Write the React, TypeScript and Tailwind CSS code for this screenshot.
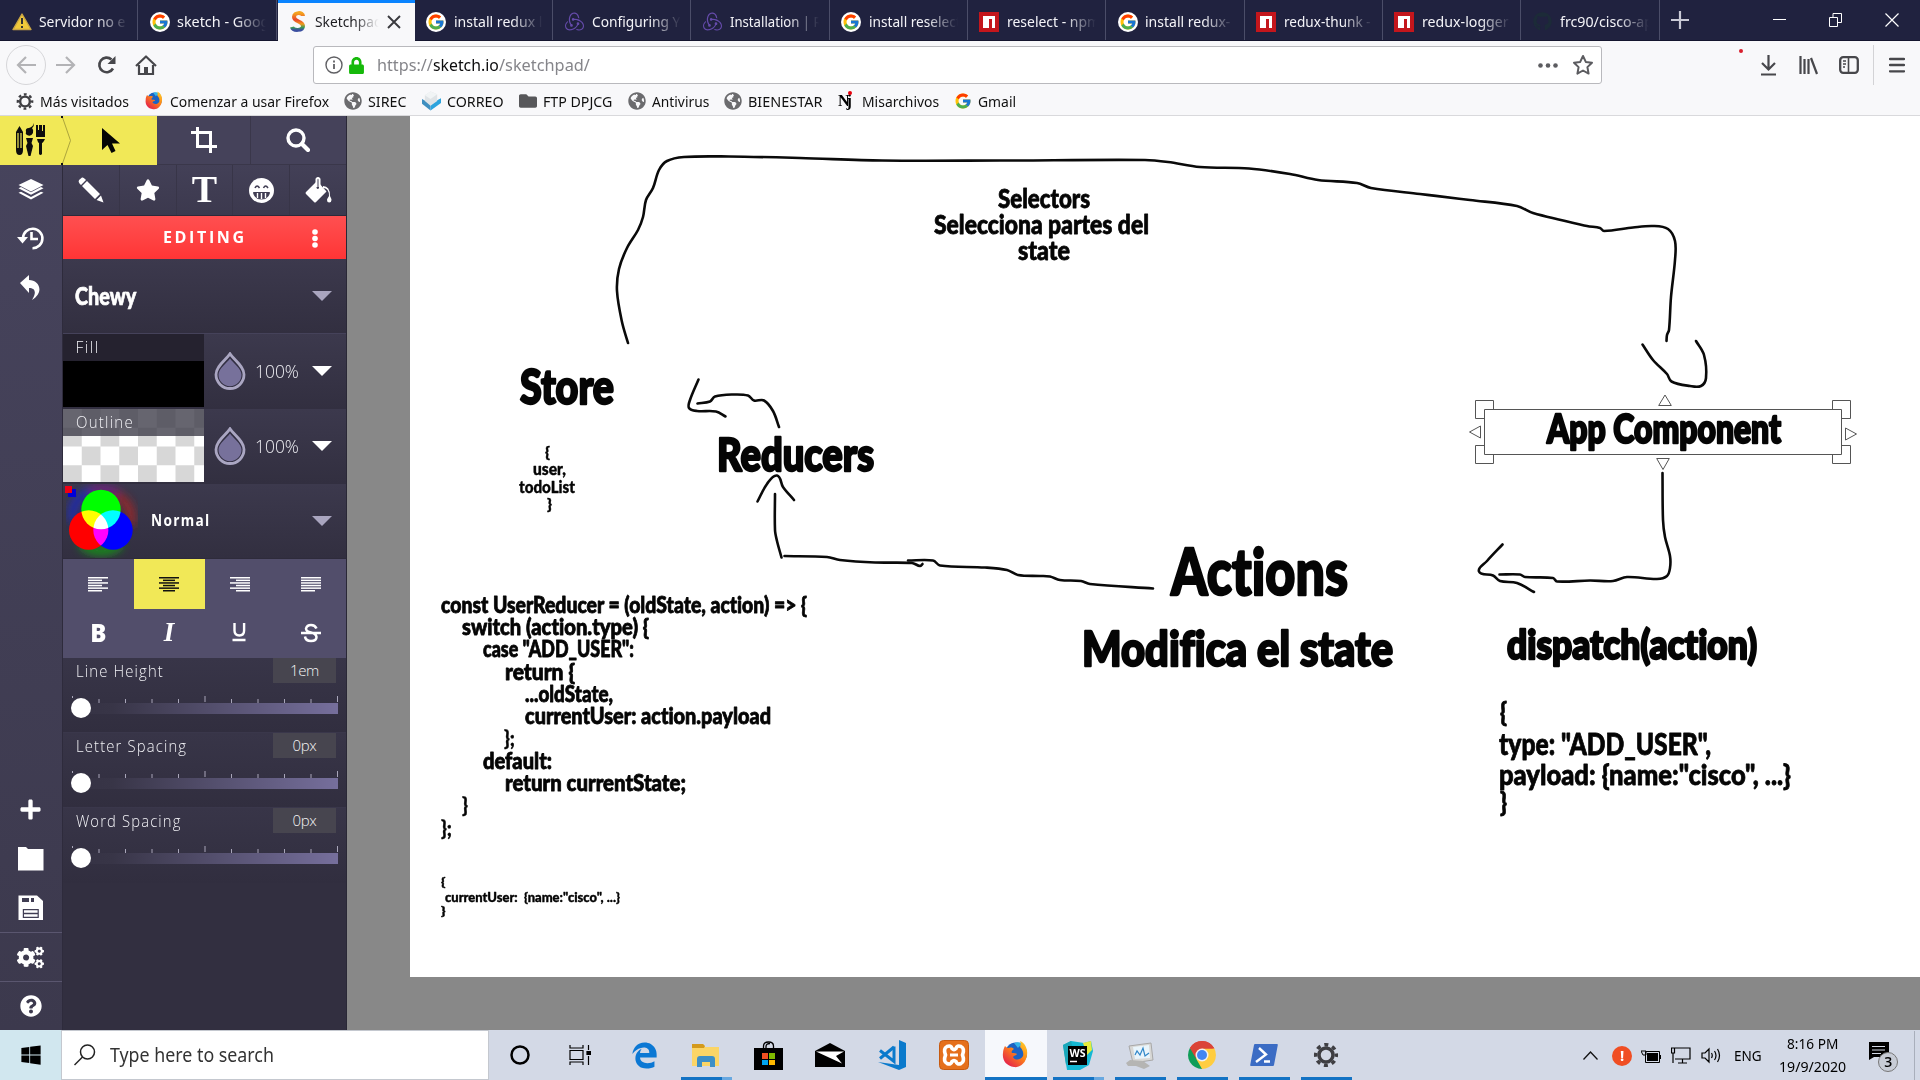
import { useLayoutEffect, useRef, useState, type ReactNode } from "react";
import { FaCogs, FaFolder, FaStar, FaWindows, FaGithub, FaEdgeLegacy, FaLock, FaPlus, FaQuestionCircle, FaGlobeAmericas } from "react-icons/fa";
import { FcGoogle } from "react-icons/fc";
import { SiRedux } from "react-icons/si";

/** A single line of text squeezed or stretched to an exact width. */
function Fit({ w, className = "", children }: { w: number; className?: string; children: ReactNode }) {
  const ref = useRef<HTMLSpanElement>(null);
  const [scale, setScale] = useState(1);
  useLayoutEffect(() => {
    if (ref.current) setScale(w / ref.current.offsetWidth);
  }, [w]);
  return (
    <span className={`inline-block shrink-0 ${className}`} style={{ width: w }}>
      <span ref={ref} className="inline-block origin-left whitespace-pre" style={{ transform: `scaleX(${scale})` }}>
        {children}
      </span>
    </span>
  );
}

/* ---------- small logos ---------- */

const GoogleBadge = () => (
  <span className="flex h-5 w-5 items-center justify-center rounded-full bg-white">
    <FcGoogle size={18} />
  </span>
);

const NpmIcon = () => (
  <svg width="20" height="20" viewBox="0 0 20 20">
    <rect width="20" height="20" fill="#c4161c" />
    <path d="M4 4h12v12h-3V7h-3v9H4z" fill="#fff" />
  </svg>
);

const WarningIcon = () => (
  <svg width="20" height="18" viewBox="0 0 20 18">
    <path d="M10 1 19 16.5H1z" fill="#f0c93a" stroke="#c9a544" strokeWidth="1.4" strokeLinejoin="round" />
    <path d="M10 5v6M10 13v2" stroke="#333" strokeWidth="2" />
  </svg>
);

const SketchIcon = () => (
  <svg width="16" height="21" viewBox="0 0 16 21" fill="none" strokeWidth="4">
    <defs>
      <linearGradient id="sk" x1="0" y1="0" x2="0" y2="1">
        <stop offset="0" stopColor="#f4a31f" />
        <stop offset="0.4" stopColor="#e8452c" />
        <stop offset="0.65" stopColor="#f29a1d" />
        <stop offset="0.85" stopColor="#3a9a55" />
        <stop offset="1" stopColor="#3b4fa0" />
      </linearGradient>
    </defs>
    <path d="M13 5C13 1 4 1 4 6s9 4 9 9-10 5-11 1" stroke="url(#sk)" />
  </svg>
);

const FirefoxLogo = ({ size }: { size: number }) => (
  <svg width={size} height={size} viewBox="0 0 28 28">
    <defs>
      <linearGradient id="fx" x1="1" y1="0" x2="0.2" y2="1">
        <stop offset="0" stopColor="#ffd92e" />
        <stop offset="0.45" stopColor="#ff8a16" />
        <stop offset="1" stopColor="#e31b4d" />
      </linearGradient>
    </defs>
    <circle cx="14" cy="12.5" r="11" fill="#1b62c4" />
    <path d="M12 2c5-2 9 0 11 3-3-1-6 0-7 2z" fill="#35b5e8" />
    <path d="M3 5c1 1 2 2 4 2 2-1 4 0 5 1-2 1-3 3-2 4 2 0 4 0 5 1-1 2-3 1-4 3 2 4 8 3 10-1 1-4-1-7-3-9 1-2 1-4 0-6 5 2 8 8 7 14-1 8-7 13-13 12C4 25 0 19 1 12c0-3 1-5 2-7z" fill="url(#fx)" />
  </svg>
);

const MailCube = () => (
  <svg width="20" height="20" viewBox="0 0 20 20">
    <path d="m0 8 9 5v7l-9-7z" fill="#3f8fc0" />
    <path d="m20 7-11 6v7l11-8z" fill="#2ca3dd" />
    <path d="m3 4 6-4 7 3v7l-7 5-6-5z" fill="#dfe3e6" />
    <path d="m3 4 6-4 7 3-7 5z" fill="#f1f4f5" />
  </svg>
);

const MjIcon = () => (
  <span className="relative block h-5 w-[17px] font-['Liberation_Serif'] text-[16px] leading-[20px] font-bold tracking-[-3px] text-black">
    Nj
    <span className="absolute top-0 left-[10px] h-[4px] w-[4px] rounded-full bg-red-600" />
  </span>
);

/** Eight-toothed gear with an open hub. */
const GearRing = ({ size }: { size: number }) => (
  <svg width={size} height={size} viewBox="0 0 26 26" fill="none" stroke="#3f3f43">
    <circle cx="13" cy="13" r="7" strokeWidth="3.5" />
    <circle cx="13" cy="13" r="10.3" strokeWidth="3.5" strokeDasharray="4 4.09" strokeDashoffset="2" />
  </svg>
);

/* ---------- browser ---------- */

type TabInfo = { icon: ReactNode; title: string; w: number; active?: boolean };

const reduxIcon = <SiRedux size={19} color="#654bab" />;

const tabs: TabInfo[] = [
  { icon: <WarningIcon />, title: "Servidor no e", w: 86 },
  { icon: <GoogleBadge />, title: "sketch - Goog", w: 92 },
  { icon: <SketchIcon />, title: "Sketchpad", w: 67, active: true },
  { icon: <GoogleBadge />, title: "install redux l", w: 88 },
  { icon: reduxIcon, title: "Configuring Y", w: 88 },
  { icon: reduxIcon, title: "Installation | R", w: 92 },
  { icon: <GoogleBadge />, title: "install reselect", w: 92 },
  { icon: <NpmIcon />, title: "reselect - npm", w: 93 },
  { icon: <GoogleBadge />, title: "install redux-", w: 85 },
  { icon: <NpmIcon />, title: "redux-thunk -", w: 87 },
  { icon: <NpmIcon />, title: "redux-logger", w: 87 },
  { icon: <FaGithub size={19} color="#1c2b38" />, title: "frc90/cisco-ap", w: 93 },
];

function TabStrip() {
  return (
    <div className="flex h-[41px] border-b border-[#14152e] bg-[#20223f] text-[15px] text-[#f4f4f8]">
      {tabs.map((t) => (
        <div
          key={t.title}
          className={
            t.active
              ? "-mb-px ml-[1px] flex w-[136.85px] shrink-0 items-center border-t-[3px] border-[#0a84ff] bg-[#f8f8fa] pb-[1px] text-[#1c1c20]"
              : "flex w-[138.35px] shrink-0 items-center border-r border-[#4b4d68] pt-[3px]"
          }
        >
          <span className={t.active ? "ml-[10px] flex w-[21px] shrink-0 items-center justify-center" : "ml-[11px] flex w-[21px] shrink-0 items-center justify-center"}>{t.icon}</span>
          <span
            className={
              t.active
                ? "ml-[6px] w-[65px] overflow-hidden [mask-image:linear-gradient(90deg,#000_60%,transparent_98%)]"
                : "ml-[7px] w-[89px] overflow-hidden [mask-image:linear-gradient(90deg,#000_65%,transparent_100%)]"
            }
          >
            <Fit w={t.w}>{t.title}</Fit>
          </span>
          {t.active && (
            <svg width="14" height="14" viewBox="0 0 14 14" className="ml-[7px] shrink-0">
              <path d="m1 1 12 12M13 1 1 13" stroke="#3a3a3e" strokeWidth="1.9" />
            </svg>
          )}
        </div>
      ))}
      <div className="flex flex-1 items-center justify-between pr-[21px] pl-[11px]">
        <svg width="18" height="18" viewBox="0 0 18 18">
          <path d="M9 0v18M0 9h18" stroke="#c9cad6" strokeWidth="2.2" />
        </svg>
        <div className="flex items-center gap-[43px]">
          <svg width="13" height="14" viewBox="0 0 13 14">
            <path d="M0 6.5h13" stroke="#fff" />
          </svg>
          <svg width="13" height="14" viewBox="0 0 13 14" fill="none" stroke="#fff">
            <path d="M.5 4.500h8v9h-8zM4 4V.5h8.500v9H9" />
          </svg>
          <svg width="14" height="14" viewBox="0 0 14 14">
            <path d="m.5.5 13 13M13.500.5l-13 13" stroke="#fff" strokeWidth="1.200" />
          </svg>
        </div>
      </div>
    </div>
  );
}

function NavBar() {
  return (
    <div className="flex h-[48px] items-center">
      <div className="ml-[6px] flex h-[40px] w-[40px] items-center justify-center rounded-full border border-[#d6d6d9]">
        <svg width="20" height="18" viewBox="0 0 20 18" fill="none" stroke="#b3b3b6" strokeWidth="2.200">
          <path d="M20 9H2M10 1 2 9l8 8" />
        </svg>
      </div>
      <svg width="20" height="18" viewBox="0 0 20 18" fill="none" stroke="#b3b3b6" strokeWidth="2.200" className="ml-[10px]">
        <path d="M0 9h18M10 1l8 8-8 8" />
      </svg>
      <svg width="20" height="20" viewBox="0 0 20 20" className="ml-[20px]">
        <path d="M17 13.500A7.300 7.300 0 1 1 15.500 4.500" fill="none" stroke="#47474b" strokeWidth="2.600" />
        <path d="M19.500 1v8h-8z" fill="#47474b" />
      </svg>
      <svg width="22" height="20" viewBox="0 0 22 20" className="ml-[19px]">
        <path d="M1 11 11 1.500 21 11" fill="none" stroke="#47474b" strokeWidth="2.200" strokeLinejoin="round" />
        <path d="M4 10v9h14v-9" fill="none" stroke="#47474b" strokeWidth="2.200" />
        <path d="M9 12h4v7H9z" fill="#47474b" />
      </svg>
      <div className="ml-[156px] flex h-[38px] w-[1289px] shrink-0 items-center rounded-[3px] border border-[#b9b9bd] bg-white text-[16.500px]">
        <svg width="18" height="18" viewBox="0 0 18 18" className="ml-[11px]" fill="none" stroke="#606064">
          <circle cx="9" cy="9" r="8" strokeWidth="1.400" />
          <path d="M9 8v5M9 4.500v2" strokeWidth="1.800" />
        </svg>
        <FaLock size={17} color="#16b90a" className="ml-[5px]" />
        <span className="ml-[12px] flex">
          <Fit w={56} className="text-[#85858a]">https://</Fit>
          <Fit w={66} className="text-[#0c0c0d]">sketch.io</Fit>
          <Fit w={91} className="text-[#85858a]">/sketchpad/</Fit>
        </span>
        <span className="flex-1" />
        <svg width="20" height="5" viewBox="0 0 20 5" fill="#5c5c60">
          <circle cx="2.500" cy="2.500" r="2.300" />
          <circle cx="10" cy="2.500" r="2.300" />
          <circle cx="17.500" cy="2.500" r="2.300" />
        </svg>
        <svg width="22" height="22" viewBox="0 0 22 22" className="mr-[7px] ml-[14px]">
          <path d="m11 2 2.800 5.900 6.200.8-4.600 4.400 1.200 6.500L11 16.500l-5.600 3.100 1.200-6.500L2 8.700l6.200-.8z" fill="none" stroke="#5c5c60" strokeWidth="2" strokeLinejoin="round" />
        </svg>
      </div>
      <span className="mb-[28px] ml-[137px] h-[4px] w-[4px] rounded-full bg-[#d81e2c]" />
      <svg width="17" height="21" viewBox="0 0 17 21" fill="none" stroke="#47474b" strokeWidth="2.200" className="ml-[17px]">
        <path d="M8.500 0v14M2 8l6.500 6.500L15 8M1 19.500h15" />
      </svg>
      <svg width="20" height="19" viewBox="0 0 20 19" fill="none" stroke="#47474b" strokeWidth="2.200" className="ml-[22px]">
        <path d="M1.500 0v18M5.500 3v15M9.500 3v15M12 2l6 16" />
      </svg>
      <svg width="20" height="18" viewBox="0 0 20 18" fill="none" stroke="#47474b" className="ml-[20px]">
        <rect x="1.200" y="1.200" width="17.600" height="15.600" rx="3" strokeWidth="2.300" />
        <path d="M9.500 1v16" strokeWidth="1.600" />
        <path d="M4 5h3M4 8h3M4 11h2" strokeWidth="1.300" />
      </svg>
      <span className="ml-[14px] h-[40px] w-px bg-[#d3d3d6]" />
      <svg width="16" height="16" viewBox="0 0 16 16" stroke="#47474b" strokeWidth="2.300" strokeLinecap="round" className="ml-[15px]">
        <path d="M1 2h14M1 8h14M1 14.300h14" />
      </svg>
    </div>
  );
}

const globe = <FaGlobeAmericas size={18} color="#6b6b6e" />;

const bookmarks = [
  { icon: <GearRing size={19} />, iw: "w-[18px]", label: "Más visitados", w: 89 },
  { icon: <FirefoxLogo size={20} />, iw: "w-[19px]", label: "Comenzar a usar Firefox", w: 159 },
  { icon: globe, iw: "w-[18px]", label: "SIREC", w: 38 },
  { icon: <MailCube />, iw: "w-[19px]", label: "CORREO", w: 57 },
  { icon: <FaFolder size={18} color="#57575a" />, iw: "w-[18px]", label: "FTP DPJCG", w: 69 },
  { icon: globe, iw: "w-[18px]", label: "Antivirus", w: 57 },
  { icon: globe, iw: "w-[18px]", label: "BIENESTAR", w: 74 },
  { icon: <MjIcon />, iw: "w-[18px]", label: "Misarchivos", w: 77 },
  { icon: <FcGoogle size={18} />, iw: "w-[18px]", label: "Gmail", w: 38 },
];

function Bookmarks() {
  return (
    <div className="flex h-[27px] items-center gap-[15.500px] border-b border-[#d9d9dc] pb-[2px] pl-[16px] text-[15px] text-[#111]">
      {bookmarks.map((b) => (
        <div key={b.label} className="flex items-center gap-[6px]">
          <span className={`flex justify-center ${b.iw}`}>{b.icon}</span>
          <Fit w={b.w}>{b.label}</Fit>
        </div>
      ))}
    </div>
  );
}

/* ---------- Sketchpad side bar ---------- */

const SideCell = ({ children, line = false }: { children: ReactNode; line?: boolean }) => (
  <div className={line ? "flex h-[49px] items-center justify-center border-t border-[#5a566f] pr-px" : "flex h-[49px] items-center justify-center pr-px"}>{children}</div>
);

function IconColumn() {
  return (
    <div className="flex w-[63px] flex-col border-r border-[#2e2b3c] bg-linear-to-b from-[#47445d] to-[#3c394d]">
      <div className="relative z-10 h-[49px]">
        <svg width="72" height="49" viewBox="0 0 72 49" className="absolute top-0 left-0">
          <path d="M0 0h62l8.500 24.500L62 49H0z" fill="#f1e857" />
          <path d="m62 0 8.500 24.500L62 49" fill="none" stroke="#a49d3a" strokeWidth="0.900" />
          <g fill="#0d0d0d">
            <path d="m19.500 10-3.500 6v18q0 5 3.500 5t3.500-5V16z" />
            <path d="M18 17v15M21 17v15" stroke="#f1e857" strokeWidth="1.200" />
            <path d="M26 16q-1-4 3-4 4-1 5-5 0 4-2 5 2 2 1 5-2 4-6 2-2-1-1-3zM26 22h7l-1.500 5 1.500 3-2.500 10h-2L26 30l1.500-3z" />
            <path d="M36 21V9h2v5h1V9h3v6h1V9h2v12zM37 23h8q-2 4-3 4v11q-1.500 2-3 0V27q-1 0-2-4z" />
          </g>
          <path d="M62 0v2M62 47v2" stroke="#111" strokeWidth="2" />
        </svg>
      </div>
      <SideCell>
        <svg width="26" height="24" viewBox="0 0 26 24" fill="#fff">
          <path d="M13 1 25.500 7 13 13.500.5 7zM.5 10.200l2.500-1.100 10 5.200 10-5.200 2.500 1.100L13 16.800zM.5 14.800l2.500-1.100 10 5.200 10-5.200 2.500 1.100L13 21.400z" />
        </svg>
      </SideCell>
      <SideCell>
        <svg width="27" height="24" viewBox="0 0 27 24" className="-mt-[2px]">
          <path d="M6 12a9.700 9.700 0 1 1 9.500 10.200" fill="none" stroke="#fff" strokeWidth="2.600" />
          <path d="M0 11h11l-5.500 6.500z" fill="#fff" />
          <path d="M14.500 6v7H21" fill="none" stroke="#fff" strokeWidth="2.600" />
        </svg>
      </SideCell>
      <SideCell>
        <svg width="24" height="26" viewBox="0 0 24 26" fill="#fff">
          <path d="M1 8 10 0v5c10 0 16 12 3 20 5-8 3-12-3-12v5z" />
        </svg>
      </SideCell>
      <div className="flex-1" />
      <SideCell>
        <FaPlus size={23} color="#fff" />
      </SideCell>
      <SideCell>
        <svg width="26" height="24" viewBox="0 0 26 24" fill="#fff">
          <path d="M0 0h8l2 2h15.500v21.500H0z" />
        </svg>
      </SideCell>
      <SideCell>
        <svg width="26" height="26" viewBox="0 0 26 26">
          <path d="M.5.5H19L25 6v19H.5z" fill="#fff" />
          <path d="M4 3h7v4H4zM13 3h3v4h-3zM4.800 14h16v9h-16z" fill="#403d53" />
          <path d="M6 15.200h13.600v2.500H6zM6 19.200h13.600v2.500H6z" fill="#fff" />
        </svg>
      </SideCell>
      <SideCell line>
        <FaCogs size={27} color="#fff" />
      </SideCell>
      <SideCell line>
        <FaQuestionCircle size={22} color="#fff" />
      </SideCell>
    </div>
  );
}

const Caret = ({ color }: { color: string }) => (
  <svg width="20" height="10" viewBox="0 0 20 10">
    <path d="M0 0h20L10 10z" fill={color} />
  </svg>
);

const ToolRow1 = () => (
  <div className="flex h-[49px]">
    <div className="flex w-[94px] items-center justify-center bg-[#f1e857] pl-[2px]">
      <svg width="18" height="25" viewBox="0 0 18 25">
        <path d="M0 0v22l5.500-5 4 8 4-2-3.500-7.500H18z" fill="#050505" />
      </svg>
    </div>
    <div className="flex w-[94px] items-center justify-center border-r border-b border-[#3a374a] bg-[#45425a]">
      <svg width="26" height="26" viewBox="0 0 26 26" fill="none" stroke="#fff" strokeWidth="3">
        <path d="M6.500 0v19.500H26M0 5.500h19.500V26" />
      </svg>
    </div>
    <div className="flex flex-1 items-center justify-center border-b border-[#3a374a] bg-[#45425a] pr-[2px]">
      <svg width="24" height="24" viewBox="0 0 24 24" fill="none" stroke="#fff">
        <circle cx="10" cy="10" r="8" strokeWidth="3.400" />
        <path d="m16 16 6 6" strokeWidth="4.200" strokeLinecap="round" />
      </svg>
    </div>
  </div>
);

const Tool = ({ children }: { children: ReactNode }) => (
  <div className="flex flex-1 items-center justify-center border-r border-[#383548] last:border-r-0">{children}</div>
);

const ToolRow2 = () => (
  <div className="flex h-[51px] border-b border-[#2d2a3a] bg-linear-to-b from-[#434057] to-[#3c394e]">
    <Tool>
      <svg width="26" height="26" viewBox="0 0 26 26" fill="#fff">
        <path d="M1 3 4 .5Q5.500 0 7 2l1 1-5 5-1.500-1.500Q0 4.500 1 3zM9 4l13 13-5 5L4 9zM23 18.500l2.500 7-7-2.500z" />
      </svg>
    </Tool>
    <Tool>
      <FaStar size={24} color="#fff" />
    </Tool>
    <Tool>
      <span className="-mt-[3px] font-['Liberation_Serif'] text-[38px] leading-none font-bold text-white">T</span>
    </Tool>
    <Tool>
      <svg width="25" height="25" viewBox="0 0 25 25" fill="none" stroke="#403d53">
        <circle cx="12.500" cy="12.500" r="12.500" fill="#fff" stroke="none" />
        <path d="M6 10q2-4 4.500 0M14.500 10q2-4 4.500 0" strokeWidth="1.500" />
        <path d="M4.500 14.500h16q-1 6.500-8 6.500t-8-6.500z" fill="#403d53" strokeWidth="1" />
        <path d="M8.500 15v5M12.500 15v6M16.500 15v5" stroke="#fff" strokeWidth="1.400" />
      </svg>
    </Tool>
    <Tool>
      <svg width="27" height="26" viewBox="0 0 27 26" fill="#fff">
        <path d="M12 4 1 15q-1 1 0 2l8 8q1 1 2 0l10.500-10.500L14 6v5q-1 2-2.500 0z" />
        <path d="M11.500 10V2q1.500-2 3 0v8" fill="none" stroke="#fff" strokeWidth="2" />
        <path d="M18 11q6 0 6 8-2 3-2 4 0 2.500 2.200 2.500T26.500 23q0-1-1.500-4 0-10-7-10z" />
      </svg>
    </Tool>
  </div>
);

function Opacity() {
  return (
    <div className="flex flex-1 items-center pb-px pl-[10px]">
      <svg width="32" height="38" viewBox="0 0 32 38">
        <path d="M16 1.800C12 8 2 14 2 22.500a14 14 0 0 0 28 0C30 14 20 8 16 1.800z" fill="#322f42" stroke="#aaa6c2" strokeWidth="2.800" />
        <path d="M16 6.500C13 11 4.500 16.500 4.500 22.700a11.500 11.500 0 0 0 23 0C27.500 16.500 19 11 16 6.500z" fill="#77719b" />
      </svg>
      <Fit w={44} className="ml-[9px] font-['Open_Sans'] text-[19px] font-light text-[#eeeef3]">100%</Fit>
      <span className="ml-[13px]">
        <Caret color="#fff" />
      </span>
    </div>
  );
}

const bars = {
  left: [[0, 20], [0, 14], [0, 20], [0, 14], [0, 20], [0, 14]],
  center: [[0, 20], [4, 12], [0, 20], [4, 12], [0, 20], [4, 12]],
  right: [[0, 20], [6, 14], [0, 20], [6, 14], [0, 20], [6, 14]],
  justify: [[0, 20], [0, 20], [0, 20], [0, 20], [0, 20], [0, 14]],
};

const AlignIcon = ({ kind, color }: { kind: keyof typeof bars; color: string }) => (
  <svg width="20" height="15" viewBox="0 0 20 15" fill={color}>
    {bars[kind].map(([x, w], i) => (
      <rect key={i} x={x} y={i * 2.6} width={w} height="1.500" />
    ))}
  </svg>
);

function Slider({ label, w, value }: { label: string; w: number; value: string }) {
  return (
    <div className="h-[75px] border-b border-[#3a374b] bg-linear-to-b from-[#383548] to-[#312e3f] last:border-b-0">
      <div className="flex h-[25px] justify-between pr-[10px] pl-[12.500px]">
        <Fit w={w} className="font-['Open_Sans'] text-[15.500px] leading-[26px] font-light tracking-[1.200px] text-[#f2f2f6]">{label}</Fit>
        <span className="w-[63px] bg-[#47454f] text-center font-['Open_Sans'] text-[15px] leading-[24px] font-light tracking-[-0.400px] text-[#f4f4f4]">{value}</span>
      </div>
      <svg width="283" height="32" viewBox="0 0 283 32" className="mt-[11px]">
        <defs>
          <linearGradient id="track" x1="0" x2="1" y1="0" y2="0">
            <stop offset="0" stopColor="#353244" />
            <stop offset="0.150" stopColor="#383547" />
            <stop offset="1" stopColor="#766f9c" />
          </linearGradient>
        </defs>
        <rect x="10" y="9" width="265" height="11" fill="url(#track)" />
        {Array.from({ length: 11 }, (_, i) => (
          <path key={i} d={i === 0 ? "M9.500 2v2" : i % 5 ? `M${9.5 + i * 26.5} 5v4` : `M${9.5 + i * 26.5} 2v6`} stroke="#a9a6ba" />
        ))}
        <circle cx="18" cy="14" r="10" fill="#fff" />
      </svg>
    </div>
  );
}

function ToolPanel() {
  return (
    <div className="flex w-[284px] flex-col border-r border-[#2a2836] bg-[#322f40]">
      <ToolRow1 />
      <ToolRow2 />
      <div className="flex h-[43px] items-center bg-linear-to-b from-[#ff4f50] to-[#ff3435] pt-px pl-[99.500px] text-white">
        <Fit w={84} className="font-['Open_Sans'] text-[15.500px] font-bold tracking-[2.500px]">EDITING</Fit>
        <svg width="6" height="19" viewBox="0 0 6 19" fill="#fff" className="ml-[65px]">
          <circle cx="3" cy="3" r="2.800" />
          <circle cx="3" cy="9.500" r="2.800" />
          <circle cx="3" cy="16" r="2.800" />
        </svg>
      </div>
      <div className="flex h-[74px] items-center justify-between bg-linear-to-b from-[#3c394d] to-[#322f40] pr-[14px] pb-px pl-[12px]">
        <Fit w={61} className="font-['Lato'] text-[24px] font-black text-white [-webkit-text-stroke:0.700px_#fff]">Chewy</Fit>
        <Caret color="#a9a5bf" />
      </div>
      <div className="flex h-[76px] border-t border-[#45425a] bg-linear-to-b from-[#3c394d] to-[#322f40]">
        <div className="h-[73px] w-[141px] bg-black">
          <div className="h-[27px] bg-[#25222f] pl-[12.500px] font-['Open_Sans'] text-[15.500px] leading-[27px] font-light tracking-[1.500px] text-[#f2f2f6]">Fill</div>
        </div>
        <Opacity />
      </div>
      <div className="flex h-[75px] bg-linear-to-b from-[#3c394d] to-[#322f40]">
        <div className="h-[73px] w-[141px] bg-[conic-gradient(#d7d7d7_25%,#fff_0_50%,#d7d7d7_0_75%,#fff_0)] bg-size-[37.500px_37.500px]">
          <div className="h-[27px] bg-[#403e4b]/80 pl-[12.500px] text-[#f2f2f6]">
            <Fit w={58} className="font-['Open_Sans'] text-[15.500px] leading-[27px] font-light tracking-[1.300px]">Outline</Fit>
          </div>
        </div>
        <Opacity />
      </div>
      <div className="flex h-[74px] items-center bg-linear-to-b from-[#3c394d] to-[#322f40] pr-[14px] pb-px">
        <svg width="76" height="74" viewBox="0 0 76 74">
          <defs>
            <filter id="glow">
              <feGaussianBlur stdDeviation="4.500" />
            </filter>
          </defs>
          <g filter="url(#glow)" fill="none" strokeWidth="9" opacity="0.850">
            <path d="M10 38Q6 14 30 7" stroke="#1a2cc0" />
            <path d="M28 7q18-4 26 4" stroke="#7a1b8a" />
            <path d="M52 11q18 8 16 30" stroke="#a32626" />
            <path d="M18 60q20 14 40 0" stroke="#16a016" />
          </g>
          <rect x="5" y="5" width="8" height="8" fill="#0000d8" />
          <rect x="2" y="2" width="7" height="7" fill="#f00014" />
          <g className="isolate">
            <circle cx="38" cy="25.500" r="19.700" fill="#0f0" className="mix-blend-screen" />
            <circle cx="25.700" cy="46" r="19.700" fill="#f00" className="mix-blend-screen" />
            <circle cx="50" cy="46" r="19.700" fill="#00f" className="mix-blend-screen" />
          </g>
        </svg>
        <Fit w={60} className="ml-[12px] font-['Open_Sans'] text-[15.500px] font-bold tracking-[1.500px] text-white">Normal</Fit>
        <span className="flex-1" />
        <Caret color="#a9a5bf" />
      </div>
      <div className="grid h-[101px] grid-cols-4 grid-rows-2 items-center justify-items-center border-t border-[#2e2b3b] bg-[#524e6b] text-white">
        <AlignIcon kind="left" color="#fff" />
        <span className="flex h-full w-full items-center justify-center bg-[#f1e857]">
          <AlignIcon kind="center" color="#111" />
        </span>
        <AlignIcon kind="right" color="#fff" />
        <AlignIcon kind="justify" color="#fff" />
        <span className="-mt-[3px] font-['Open_Sans'] text-[24px] leading-none font-extrabold">B</span>
        <span className="-mt-[3px] font-['Liberation_Serif'] text-[27px] leading-none font-bold italic">I</span>
        <svg width="15" height="19" viewBox="0 0 15 19" fill="none" stroke="#fff" strokeWidth="2.400" className="-mt-[3px]">
          <path d="M2.500 0v7.500q0 5 4.800 5t4.800-5V0M.5 17h13" />
        </svg>
        <svg width="20" height="20" viewBox="0 0 20 20" fill="none" stroke="#fff" strokeWidth="2.500" className="-mt-[3px]">
          <path d="M15.500 5.500Q14 2 10 2T5 5.500Q5 8.500 10 9.500T15.500 14q0 4-5.500 4t-6-4.500M0 10h20" />
        </svg>
      </div>
      <div className="-mt-px">
        <Slider label="Line Height" w={88} value="1em" />
        <Slider label="Letter Spacing" w={111} value="0px" />
        <Slider label="Word Spacing" w={106} value="0px" />
      </div>
    </div>
  );
}

/* ---------- drawing canvas ---------- */

type Pt = [number, number];

/** Smooth curve through the points of one pen stroke. */
function stroke(p: Pt[]) {
  let d = `M${p[0][0]} ${p[0][1]}`;
  for (let i = 0; i < p.length - 1; i++) {
    const a = p[i - 1] ?? p[i];
    const b = p[i];
    const c = p[i + 1];
    const e = p[i + 2] ?? c;
    const len = Math.hypot(c[0] - b[0], c[1] - b[1]);
    const k1 = len / (Math.hypot(c[0] - a[0], c[1] - a[1]) || 1) / 3;
    const k2 = len / (Math.hypot(e[0] - b[0], e[1] - b[1]) || 1) / 3;
    d += `C${b[0] + (c[0] - a[0]) * k1} ${b[1] + (c[1] - a[1]) * k1} ${c[0] - (e[0] - b[0]) * k2} ${c[1] - (e[1] - b[1]) * k2} ${c[0]} ${c[1]}`;
  }
  return d;
}

const strokes: Pt[][] = [
  [[628, 343], [622, 322], [617, 291], [619, 269], [627, 248], [638, 230], [643, 217], [646, 200], [653, 188], [659, 170], [667, 161], [684, 157], [729, 156.5], [800, 158], [882, 160.5], [1000, 160.5], [1145, 160], [1168, 162], [1200, 167], [1249, 168.5], [1290, 174], [1318, 180], [1357, 183], [1371, 188], [1420, 194], [1470, 200], [1517, 206], [1533, 213], [1587, 226], [1600, 228], [1604, 231], [1633, 227.5], [1653, 226], [1668, 229], [1675, 241], [1675, 260], [1671, 297], [1669, 330], [1667, 335], [1666.5, 341]],
  [[1642.5, 344.5], [1653, 360], [1667, 374], [1671.5, 381.5], [1690, 386], [1701, 386], [1706, 378], [1704, 355], [1696, 341]],
  [[1662.5, 473], [1663, 520], [1665, 537], [1670, 556], [1670, 568], [1667, 576], [1657, 579], [1627, 577], [1613, 581], [1590, 580.5], [1557, 581.5], [1553, 578], [1525, 577], [1520, 574.5], [1499.5, 574.5]],
  [[1502.5, 544.5], [1487, 561], [1479, 571.5], [1493, 575.5], [1500, 581], [1517, 583], [1534, 592]],
  [[698.5, 379.5], [690, 400], [689, 408], [697, 411], [716, 411.5], [725.5, 416.5]],
  [[697.5, 403.5], [710, 401.5], [715, 396.5], [733, 394.5], [748, 395.5], [754, 400.5], [764, 400.5], [773, 411], [779, 427]],
  [[757.5, 501.5], [767, 484], [777, 475.5], [783, 487], [794, 500]],
  [[775, 494], [775, 530], [777, 541], [781.5, 557.5]],
  [[784.5, 556], [827, 557], [840, 560], [875, 562.5], [912, 563], [920, 566], [922.5, 564]],
  [[908, 560.5], [933, 560.5], [940, 565.5], [985, 567.5], [1007, 570], [1018, 575], [1040, 576], [1050, 576.5], [1060, 580], [1081, 581], [1090, 584], [1153, 588.5]],
];

type Note = [text: string, x: number, baseline: number, width: number, size: number];

const notes: Note[] = [
  ["Selectors", 998, 208, 92, 26],
  ["Selecciona partes del", 934, 234, 215, 26],
  ["state", 1018, 260, 52, 26],
  ["Store", 520, 404, 94, 48],
  ["{", 545, 457, 5, 15],
  ["user,", 533, 475, 33, 16],
  ["todoList", 519, 493, 56, 17],
  ["}", 547, 509, 5, 15],
  ["Reducers", 717, 471, 157, 46],
  ["App Component", 1547, 443, 234, 39],
  ["Actions", 1171, 595, 177, 65],
  ["Modifica el state", 1082, 666, 311, 48],
  ["dispatch(action)", 1507, 659, 250, 40],
  ["{", 1500, 722, 7, 27],
  ["type: \"ADD_USER\",", 1499, 755, 212, 30],
  ["payload: {name:\"cisco\", ...}", 1499, 785, 292, 29],
  ["}", 1500, 812, 7, 26],
  ["const UserReducer = (oldState, action) => {", 441, 613, 366, 22],
  ["switch (action.type) {", 462, 635, 187, 22],
  ["case \"ADD_USER\":", 483, 657, 151, 22],
  ["return {", 505, 680, 70, 22],
  ["...oldState,", 525, 702, 88, 22],
  ["currentUser: action.payload", 525, 724, 246, 22],
  ["};", 504, 746, 11, 20],
  ["default:", 483, 769, 69, 22],
  ["return currentState;", 505, 791, 181, 22],
  ["}", 462, 813, 6, 20],
  ["};", 441, 836, 11, 20],
  ["{", 441, 886, 4.5, 12],
  ["currentUser:  {name:\"cisco\", ...}", 445, 902, 175, 14],
  ["}", 441, 915, 4.5, 12],
];

function Drawing() {
  return (
    <svg width="1510" height="861" viewBox="410 116 1510 861" className="block bg-white">
      <g fill="none" stroke="#0a0a0a" strokeWidth="2.600" strokeLinecap="round" strokeLinejoin="round">
        {strokes.map((s, i) => (
          <path key={i} d={stroke(s)} />
        ))}
      </g>
      <g fill="#fff" stroke="#555" strokeWidth="1">
        <path d="M1475.500 400.500h18v18h-18zM1832.500 400.500h18v18h-18zM1475.500 445.500h18v18h-18zM1832.500 445.500h18v18h-18z" />
        <path d="M1484.500 409.500h357v45h-357z" />
        <path d="m1665 395-6.300 10.500h12.600zM1656.700 458.500h12.600L1663 469.500zM1469.500 432l11-6v12zM1856.500 434l-11-6v12z" />
      </g>
      <g className="font-['Lato'] font-black [font-variant-ligatures:none]" fill="#050505" stroke="#050505" strokeLinejoin="round">
        {notes.map(([text, x, y, w, size], i) => (
          <text key={i} x={x} y={y} fontSize={size} textLength={w} lengthAdjust="spacingAndGlyphs" strokeWidth={size > 35 ? 2.4 : size > 20 ? 0.8 : 0.4}>
            {text.replace(/ {2}/g, "\u00a0 ")}
          </text>
        ))}
      </g>
    </svg>
  );
}

/* ---------- Windows task bar ---------- */

const Task = ({ children, open, stacked, active }: { children: ReactNode; open?: boolean; stacked?: boolean; active?: boolean }) => (
  <div className={active ? "flex h-full w-[62px] flex-col items-center bg-[#f6f8fc]" : "flex h-full w-[62px] flex-col items-center"}>
    <div className="flex flex-1 items-center justify-center pt-[3px]">{children}</div>
    <div className="flex h-[3px] w-full justify-center">
      {open && <span className={active ? "w-full bg-[#1373c4]" : stacked ? "w-[41px] bg-[#1373c4]" : "w-[51px] bg-[#1373c4]"} />}
      {stacked && <span className="w-[10px] bg-[#68a8e0]" />}
    </div>
  </div>
);

function Taskbar() {
  return (
    <div className="flex h-[50px] bg-[#d3d9e6]">
      <div className="flex w-[61px] items-center justify-center bg-[#d1e7ef]">
        <FaWindows size={22} color="#000" />
      </div>
      <div className="flex w-[428px] items-center border border-[#c4c8cf] bg-white">
        <svg width="22" height="22" viewBox="0 0 22 22" fill="none" stroke="#222" strokeWidth="1.500" className="ml-[12px]">
          <circle cx="13.500" cy="8" r="7" />
          <path d="m8.500 13-8 8" />
        </svg>
        <Fit w={164} className="ml-[14px] text-[19px] text-[#333]">Type here to search</Fit>
      </div>
      <Task>
        <svg width="20" height="20" viewBox="0 0 20 20">
          <circle cx="10" cy="10" r="8.500" fill="none" stroke="#000" strokeWidth="2.500" />
        </svg>
      </Task>
      <Task>
        <svg width="22" height="20" viewBox="0 0 22 20" fill="none" stroke="#000" strokeWidth="1.200" className="ml-[-4px]">
          <path d="M1 0v3h13V0M1 5.500h13v9H1zM1 20v-3h13v3M19.500 0v5M19.500 11v9" />
          <path d="M18 6.500h3.500v3H18z" fill="#000" />
        </svg>
      </Task>
      <Task>
        <FaEdgeLegacy size={27} color="#0b78d4" />
      </Task>
      <Task open stacked>
        <svg width="28" height="25" viewBox="0 0 28 25">
          <path d="M0 1h11l2 3h14v19H0z" fill="#fbd566" />
          <path d="M0 1h11l2 2-1 2H0z" fill="#d49a1c" />
          <path d="M5 24v-8q0-3 3-3h12q3 0 3 3v8h-5v-5h-8v5z" fill="#3d8fc6" />
        </svg>
      </Task>
      <Task>
        <svg width="29" height="29" viewBox="0 0 29 29">
          <path d="M0 7h29v22H0z" />
          <path d="M9.500 8V5q0-4 5-4t5 4v3M12 8V5.500q0-3 4-3" fill="none" stroke="#000" strokeWidth="1.300" />
          <path d="M8 12h6v6H8z" fill="#f25022" />
          <path d="M15 12h6v6h-6z" fill="#7fba00" />
          <path d="M8 19h6v5H8z" fill="#00a4ef" />
          <path d="M15 19h6v5h-6z" fill="#ffb900" />
        </svg>
      </Task>
      <Task>
        <svg width="30" height="24" viewBox="0 0 30 24">
          <path d="m0 8 15-8 15 8v16H0z" />
          <path d="m1 8.500 26 12-6-7.500 8-4.500z" fill="#fff" />
        </svg>
      </Task>
      <Task>
        <svg width="30" height="30" viewBox="0 0 30 30">
          <path d="m22 0 7 3v24l-7 3L1 22l21 3z" fill="#0a7acc" />
          <path d="M17 6.500v15L3 10.500" fill="none" stroke="#0a7acc" strokeWidth="3" />
          <path d="M3 18.500 17 7" stroke="#0a7acc" strokeWidth="3" />
        </svg>
      </Task>
      <Task>
        <svg width="30" height="30" viewBox="0 0 30 30">
          <rect x="0.500" y="0.500" width="29" height="29" rx="4" fill="#e5701c" stroke="#c65a10" />
          <path d="M8 6.500q4-1.500 5 2 2 2 4 0 1-3.500 5-2 4 2 1.500 8.500 2.500 6.500-1.500 8.500-4 1.500-5-2-2-2-4 0-1 3.500-5 2-4-2-1.500-8.500Q4 8.500 8 6.500z" fill="none" stroke="#fff" strokeWidth="3.600" />
          <path d="M11 15h8" stroke="#fff" strokeWidth="3" />
        </svg>
      </Task>
      <Task open active>
        <FirefoxLogo size={28} />
      </Task>
      <Task open stacked>
        <svg width="30" height="30" viewBox="0 0 30 30">
          <path d="m0 5 8-4 13 2 7-2 2 10-4 14-9 5H4z" fill="#14b8d4" />
          <path d="m20 3 8-2 1 9-5 5z" fill="#e6ec3c" />
          <path d="M0 5 8 1l3 12-8 12z" fill="#1aa6b8" />
          <path d="M5 6h19v19H5z" />
          <text x="6.500" y="17" fontSize="11" textLength="16" lengthAdjust="spacingAndGlyphs" className="font-['Open_Sans'] font-bold" fill="#fff">WS</text>
          <path d="M7 21.500h7" stroke="#fff" strokeWidth="1.500" />
        </svg>
      </Task>
      <Task open>
        <svg width="28" height="27" viewBox="0 0 28 27">
          <path d="m3 4 22-3 2 17-20 3z" fill="#d8d8d6" stroke="#a8a8a8" />
          <path d="m7 5 16-2 1 13-15 1z" fill="#e9f5fc" />
          <path d="m9 13 2-4 3 4 3-7 2 8 4-3" fill="none" stroke="#2f86c8" strokeWidth="1.200" />
          <path d="M4 18 0 21l2 3h8l8 3 6-3-7-5z" fill="#b5b5b3" />
        </svg>
      </Task>
      <Task open>
        <svg width="28" height="28" viewBox="0 0 28 28">
          <path d="M14 14 1.900 7A14 14 0 0 1 26.100 7z" fill="#db4437" />
          <path d="M14 14 26.100 7A14 14 0 0 1 14 28z" fill="#ffcd40" />
          <path d="M14 14v14A14 14 0 0 1 1.900 7z" fill="#0f9d58" />
          <path d="M14 7.500h12.400L20 18 14 28 8 17.500z" fill="#ffcd40" />
          <path d="M1.900 7 8 17.500 14 7.500h12.400a14 14 0 0 0-24.500-.5z" fill="#db4437" />
          <circle cx="14" cy="14" r="6.500" fill="#f1f1f1" />
          <circle cx="14" cy="14" r="5" fill="#4285f4" />
        </svg>
      </Task>
      <Task open>
        <svg width="28" height="22" viewBox="0 0 28 22">
          <path d="M5 0h22q1 0 .8 1L24 21q-.2 1-1 1H1q-1 0-.8-1L4 1q.2-1 1-1z" fill="#3b6cc4" />
          <path d="m9 4 7 6.500L6 18M14 17.500h6" fill="none" stroke="#fff" strokeWidth="2.400" />
        </svg>
      </Task>
      <Task open>
        <GearRing size={26} />
      </Task>
      <div className="flex flex-1 items-center justify-end pt-px">
        <svg width="15" height="9" viewBox="0 0 15 9" fill="none" stroke="#111" strokeWidth="1.300">
          <path d="m.5 8.500 7-7.500 7 7.500" />
        </svg>
        <span className="ml-[14px] flex h-5 w-5 items-center justify-center rounded-full bg-[#f04e23] text-[15px] font-bold text-white">!</span>
        <svg width="20" height="14" viewBox="0 0 20 14" className="ml-[9px]">
          <path d="M6 4h11v8H6z" />
          <path d="M4.500 2.500h14v11h-14zM0 2h5v4H2zM19.500 6v4" fill="none" stroke="#000" />
        </svg>
        <svg width="20" height="17" viewBox="0 0 20 17" fill="none" stroke="#000" strokeWidth="1.200" className="ml-[10px]">
          <path d="M4 1h15v11H4M11.500 12v4M7 16h9M.5 1h3v5h-3zM2 6v10" />
        </svg>
        <svg width="20" height="17" viewBox="0 0 20 17" fill="none" stroke="#000" strokeWidth="1.200" className="ml-[10px]">
          <path d="M1 6v5h3l4 4V2L4 6zM10.500 6q1.500 2.500 0 5M13.500 4q3 4.500 0 9M16.500 2q4 6.500 0 13" />
        </svg>
        <Fit w={28} className="ml-[13px] text-[15px] text-black">ENG</Fit>
        <div className="ml-[16px] flex w-[68px] flex-col items-center pb-[2px] text-[15px] leading-[22.500px] text-black">
          <Fit w={51}>8:16 PM</Fit>
          <Fit w={67}>19/9/2020</Fit>
        </div>
        <svg width="30" height="34" viewBox="0 0 30 34" className="ml-[23px]">
          <path d="M0 3h20v15H5l-5 3z" />
          <path d="M3 7.500h13M3 11h13M3 14.500h9" stroke="#d3d9e6" />
          <circle cx="19" cy="23" r="9.500" fill="#c7ccd6" stroke="#777" />
          <text x="15.200" y="28" fontSize="14" className="font-['Open_Sans'] font-semibold">3</text>
        </svg>
        <span className="mr-[5px] ml-[15px] h-[50px] w-px bg-[#a9afbb]" />
      </div>
    </div>
  );
}

export default function App() {
  return (
    <div className="flex h-[1080px] w-[1920px] flex-col overflow-hidden font-['Noto_Sans',sans-serif]">
      <TabStrip />
      <div className="h-[75px] bg-[#f8f8fa]">
        <NavBar />
        <Bookmarks />
      </div>
      <div className="flex h-[914px] bg-[#888]">
        <IconColumn />
        <ToolPanel />
        <div className="ml-[63px]">
          <Drawing />
        </div>
      </div>
      <Taskbar />
    </div>
  );
}
